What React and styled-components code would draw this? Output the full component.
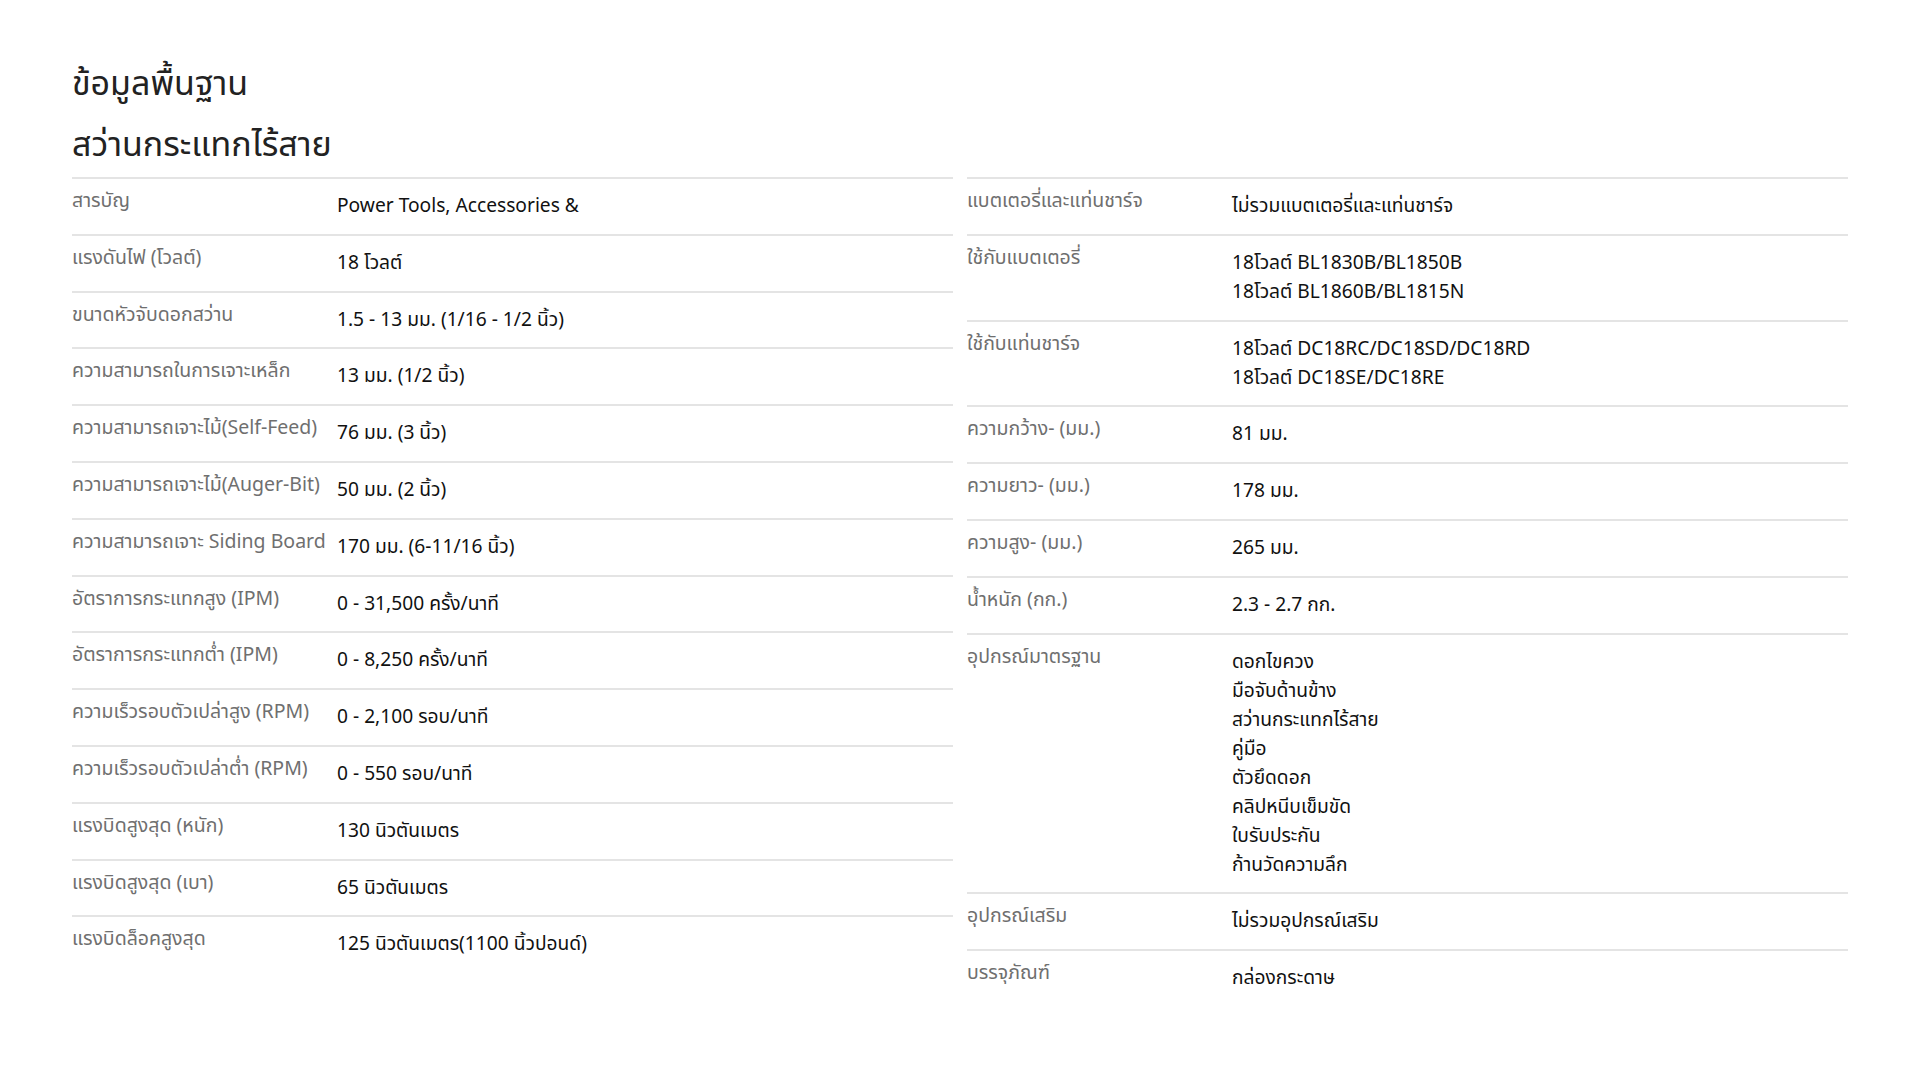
import React from "react";
import styled, { createGlobalStyle } from "styled-components";

const GlobalStyle = createGlobalStyle`
  html, body {
    margin: 0;
    padding: 0;
    background: #ffffff;
  }
  body {
    font-family: "Noto Sans Thai", "Noto Sans Thai UI", "Noto Sans", sans-serif;
    color: #111;
  }
`;

const Page = styled.div`
  padding: 54px 72px 60px;
  box-sizing: border-box;
  width: 1920px;
`;

const Heading = styled.h2`
  margin: 0;
  font-size: 34px;
  font-weight: 400;
  line-height: 61px;
  color: #222;
`;

const Columns = styled.div`
  display: grid;
  grid-template-columns: 1fr 1fr;
  column-gap: 14px;
  margin-top: 1px;
  align-items: start;
`;

const Table = styled.div`
  display: flex;
  flex-direction: column;
`;

const Row = styled.div`
  display: flex;
  border-top: 2px solid #e4e4e4;
  min-height: 54.8px;
  box-sizing: content-box;
`;

const Label = styled.div`
  flex: 0 0 265px;
  padding-top: 8px;
  font-size: 19.5px;
  line-height: 29px;
  color: #6f6f6f;
  white-space: nowrap;
`;

const Value = styled.div`
  flex: 1;
  padding: 13px 0 12.8px;
  font-size: 19.2px;
  line-height: 29px;
  color: #111;
`;

const Line = styled.div``;

const left = [
  ["สารบัญ", ["Power Tools, Accessories &"]],
  ["แรงดันไฟ (โวลต์)", ["18 โวลต์"]],
  ["ขนาดหัวจับดอกสว่าน", ["1.5 - 13 มม. (1/16 - 1/2 นิ้ว)"]],
  ["ความสามารถในการเจาะเหล็ก", ["13 มม. (1/2 นิ้ว)"]],
  ["ความสามารถเจาะไม้(Self-Feed)", ["76 มม. (3 นิ้ว)"]],
  ["ความสามารถเจาะไม้(Auger-Bit)", ["50 มม. (2 นิ้ว)"]],
  ["ความสามารถเจาะ Siding Board", ["170 มม. (6-11/16 นิ้ว)"]],
  ["อัตราการกระแทกสูง (IPM)", ["0 - 31,500 ครั้ง/นาที"]],
  ["อัตราการกระแทกต่ำ (IPM)", ["0 - 8,250 ครั้ง/นาที"]],
  ["ความเร็วรอบตัวเปล่าสูง (RPM)", ["0 - 2,100 รอบ/นาที"]],
  ["ความเร็วรอบตัวเปล่าต่ำ (RPM)", ["0 - 550 รอบ/นาที"]],
  ["แรงบิดสูงสุด (หนัก)", ["130 นิวตันเมตร"]],
  ["แรงบิดสูงสุด (เบา)", ["65 นิวตันเมตร"]],
  ["แรงบิดล็อคสูงสุด", ["125 นิวตันเมตร(1100 นิ้วปอนด์)"]],
];

const right = [
  ["แบตเตอรี่และแท่นชาร์จ", ["ไม่รวมแบตเตอรี่และแท่นชาร์จ"]],
  ["ใช้กับแบตเตอรี่", ["18โวลต์ BL1830B/BL1850B", "18โวลต์ BL1860B/BL1815N"]],
  ["ใช้กับแท่นชาร์จ", ["18โวลต์ DC18RC/DC18SD/DC18RD", "18โวลต์ DC18SE/DC18RE"]],
  ["ความกว้าง- (มม.)", ["81 มม."]],
  ["ความยาว- (มม.)", ["178 มม."]],
  ["ความสูง- (มม.)", ["265 มม."]],
  ["น้ำหนัก (กก.)", ["2.3 - 2.7 กก."]],
  [
    "อุปกรณ์มาตรฐาน",
    [
      "ดอกไขควง",
      "มือจับด้านข้าง",
      "สว่านกระแทกไร้สาย",
      "คู่มือ",
      "ตัวยึดดอก",
      "คลิปหนีบเข็มขัด",
      "ใบรับประกัน",
      "ก้านวัดความลึก",
    ],
  ],
  ["อุปกรณ์เสริม", ["ไม่รวมอุปกรณ์เสริม"]],
  ["บรรจุภัณฑ์", ["กล่องกระดาษ"]],
];

function SpecTable({ rows }) {
  return (
    <Table>
      {rows.map(([label, values]) => (
        <Row key={label}>
          <Label>{label}</Label>
          <Value>
            {values.map((v) => (
              <Line key={v}>{v}</Line>
            ))}
          </Value>
        </Row>
      ))}
    </Table>
  );
}

export default function App() {
  return (
    <>
      <GlobalStyle />
      <Page>
        <Heading>ข้อมูลพื้นฐาน</Heading>
        <Heading>สว่านกระแทกไร้สาย</Heading>
        <Columns>
          <SpecTable rows={left} />
          <SpecTable rows={right} />
        </Columns>
      </Page>
    </>
  );
}
